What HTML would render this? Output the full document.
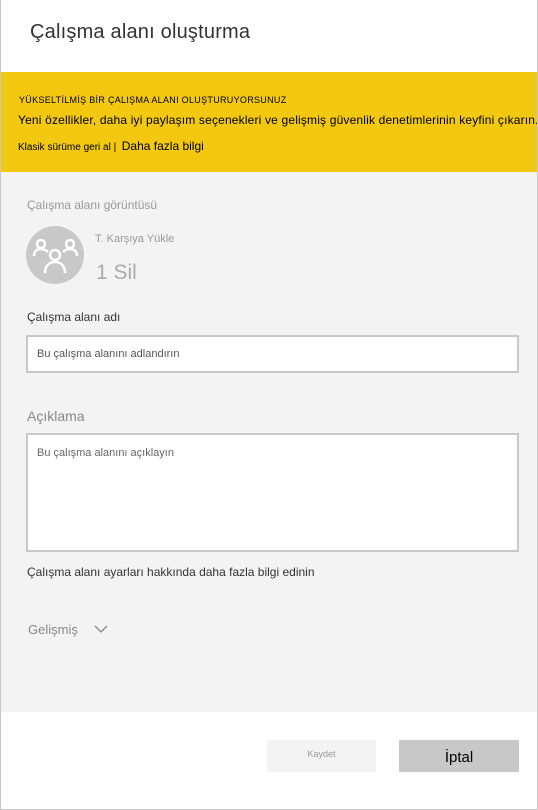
<!DOCTYPE html>
<html><head><meta charset="utf-8"><style>
*{margin:0;padding:0;box-sizing:border-box}
body{width:538px;height:810px;font-family:"Liberation Sans",sans-serif;background:#fff;position:relative;overflow:hidden}
.frame{position:absolute;left:0;top:0;width:538px;height:810px;border:1px solid #c8c8c8;border-top:none}
.a{position:absolute;white-space:nowrap}
</style></head><body>
<div class="a" style="left:30px;top:21px;font-size:20px;letter-spacing:0.2px;color:#333">Çalışma alanı oluşturma</div>
<div class="a" style="left:1px;top:72px;width:536px;height:100px;background:#f2c811"></div>
<div class="a" style="left:19px;top:95px;font-size:9px;color:#000;letter-spacing:0.3px">YÜKSELTİLMİŞ BİR ÇALIŞMA ALANI OLUŞTURUYORSUNUZ</div>
<div class="a" style="left:18px;top:113px;font-size:12px;letter-spacing:0.17px;color:#000">Yeni özellikler, daha iyi paylaşım seçenekleri ve gelişmiş güvenlik denetimlerinin keyfini çıkarın.</div>
<div class="a" style="left:18px;top:139px;font-size:10px;color:#000">Klasik sürüme geri al |&nbsp; <span style="font-size:12px">Daha fazla bilgi</span></div>
<div class="a" style="left:1px;top:172px;width:536px;height:540px;background:#f3f3f3"></div>
<div class="a" style="left:27px;top:198px;font-size:12px;color:#999">Çalışma alanı görüntüsü</div>
<div class="a" style="left:26px;top:226px;width:58px;height:58px;border-radius:50%;background:#c8c8c8"></div>
<svg class="a" style="left:26px;top:226px" width="58" height="58" viewBox="0 0 58 58" fill="none" stroke="#fff" stroke-width="2.5">
<circle cx="15" cy="18" r="4"/><circle cx="44" cy="18" r="4"/><circle cx="29" cy="29" r="5"/>
<path d="M8 30c0-5 3-7 7-7s6 2 7 3M51 30c0-5-3-7-7-7s-6 2-7 3M19 47c0-7 4-11 10-11s10 4 10 11"/></svg>
<div class="a" style="left:95px;top:233px;font-size:11px;color:#999">T. Karşıya Yükle</div>
<div class="a" style="left:96px;top:261px;font-size:21px;color:#aaa">1 Sil</div>
<div class="a" style="left:27px;top:310px;font-size:12px;color:#333">Çalışma alanı adı</div>
<div class="a" style="left:26px;top:335px;width:493px;height:38px;background:#fff;border:2px solid #c8c8c8"></div>
<div class="a" style="left:37px;top:348px;font-size:11px;color:#555">Bu çalışma alanını adlandırın</div>
<div class="a" style="left:27px;top:408px;font-size:14px;color:#888">Açıklama</div>
<div class="a" style="left:26px;top:433px;width:493px;height:119px;background:#fff;border:2px solid #c8c8c8"></div>
<div class="a" style="left:37px;top:447px;font-size:11px;color:#666">Bu çalışma alanını açıklayın</div>
<div class="a" style="left:27px;top:565px;font-size:12px;color:#333">Çalışma alanı ayarları hakkında daha fazla bilgi edinin</div>
<div class="a" style="left:28px;top:622px;font-size:13px;color:#888">Gelişmiş</div>
<svg class="a" style="left:94px;top:624px" width="14" height="10"><path d="M1 2l6 6 6-6" stroke="#888" stroke-width="1.3" fill="none"/></svg>
<div class="a" style="left:267px;top:740px;width:109px;height:32px;background:#f3f3f3;text-align:center;line-height:28px;font-size:9px;color:#999">Kaydet</div>
<div class="a" style="left:399px;top:740px;width:120px;height:32px;background:#c8c8c8;text-align:center;line-height:36px;font-size:15px;color:#000">İptal</div>
<div class="frame"></div>
</body></html>
